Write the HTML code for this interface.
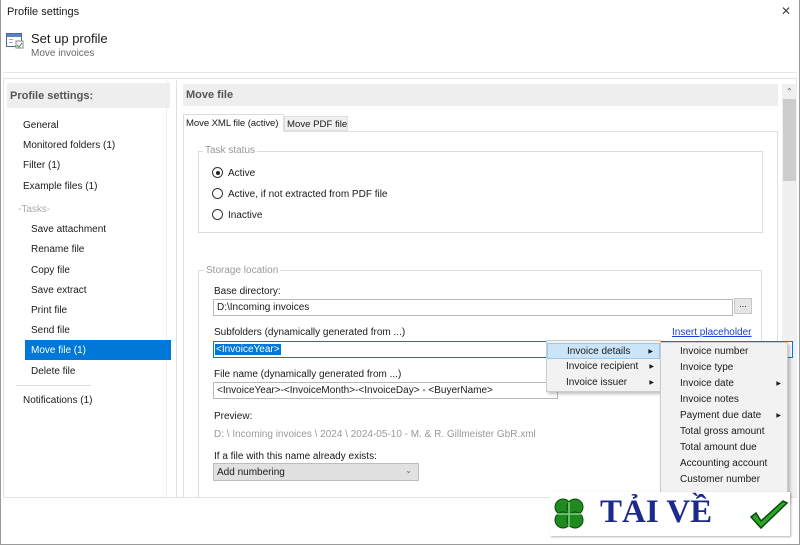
<!DOCTYPE html>
<html><head><meta charset="utf-8"><style>
*{margin:0;padding:0;box-sizing:border-box}
body{width:800px;height:545px;overflow:hidden;background:#fff;font-family:"Liberation Sans",sans-serif;font-size:10px;color:#1a1a1a;position:relative}
.a{position:absolute;white-space:nowrap}
.b{position:absolute;border:1px solid #dcdcdc}
.in{position:absolute;border:1px solid #b8b8b8;background:#fff;height:17px;padding:2px 3px;font-size:10px}
.r{position:absolute;width:11px;height:11px;border:1px solid #333;border-radius:50%;background:#fff}
.mi{position:absolute;left:0;right:0;height:16px;padding-left:19px;line-height:16px;font-size:10px}
.ar{position:absolute;right:6px;font-size:6px}
</style></head><body>
<div class="a" style="left:0;top:0;width:800px;height:545px;border:1px solid #9a9a9a;border-top:none"></div>
<div class="a" style="left:7px;top:6px;font-size:11px">Profile settings</div>
<div class="a" style="left:781px;top:4px;font-size:12px;color:#444">✕</div>
<svg class="a" style="left:6px;top:33px" width="18" height="16"><rect x="0.5" y="0.5" width="15" height="13" fill="#fff" stroke="#4a6b9a"/><rect x="1" y="1" width="14" height="3" fill="#5b83c0"/><rect x="3" y="6" width="4" height="1" fill="#aaa"/><rect x="3" y="9" width="4" height="1" fill="#aaa"/><rect x="10" y="8" width="7" height="7" fill="#fff" stroke="#888"/><path d="M11 12l2 2 3-4" stroke="#2a9a3a" fill="none"/></svg>
<div class="a" style="left:31px;top:31px;font-size:13px">Set up profile</div>
<div class="a" style="left:31px;top:48px;font-size:10px;color:#666">Move invoices</div>
<div class="a" style="left:3px;top:72px;width:794px;height:1px;background:#e6e6e6"></div>
<div class="b" style="left:3px;top:78px;width:794px;height:420px;border-color:#e2e2e2"></div>
<div class="a" style="left:176px;top:80px;width:1px;height:417px;background:#e0e0e0"></div>
<div class="a" style="left:166px;top:80px;width:1px;height:417px;background:#ececec"></div>
<!-- left -->
<div class="a" style="left:7px;top:83px;width:163px;height:25px;background:#eeeeee;font-weight:bold;font-size:11px;color:#555;padding:7px 3px">Profile settings:</div>
<div class="a" style="left:23px;top:120px">General</div>
<div class="a" style="left:23px;top:140px">Monitored folders (1)</div>
<div class="a" style="left:23px;top:160px">Filter (1)</div>
<div class="a" style="left:23px;top:181px">Example files (1)</div>
<div class="a" style="left:18px;top:204px;color:#aaa">-Tasks-</div>
<div class="a" style="left:31px;top:224px">Save attachment</div>
<div class="a" style="left:31px;top:244px">Rename file</div>
<div class="a" style="left:31px;top:265px">Copy file</div>
<div class="a" style="left:31px;top:285px">Save extract</div>
<div class="a" style="left:31px;top:305px">Print file</div>
<div class="a" style="left:31px;top:325px">Send file</div>
<div class="a" style="left:25px;top:340px;width:146px;height:20px;background:#0078d7;color:#fff;padding:5px 6px">Move file (1)</div>
<div class="a" style="left:31px;top:366px">Delete file</div>
<div class="a" style="left:16px;top:385px;width:75px;height:1px;background:#ddd"></div>
<div class="a" style="left:23px;top:395px">Notifications (1)</div>
<!-- right -->
<div class="a" style="left:183px;top:84px;width:595px;height:22px;background:#eeeeee;font-weight:bold;font-size:11px;color:#555;padding:5px 3px">Move file</div>
<div class="a" style="left:782px;top:84px;width:15px;height:413px;background:#f0f0f0"></div>
<div class="a" style="left:786px;top:87px;font-size:8px;color:#555">⌃</div>
<div class="a" style="left:783px;top:99px;width:13px;height:82px;background:#cdcdcd"></div>
<div class="a" style="left:183px;top:131px;width:595px;height:366px;border:1px solid #e0e0e0;border-bottom:none"></div>
<div class="a" style="left:183px;top:114px;width:101px;height:18px;background:#fff;border:1px solid #ddd;border-bottom:1px solid #fff;padding:3px 2px;font-size:9.6px;letter-spacing:-0.1px">Move XML file (active)</div>
<div class="a" style="left:284px;top:116px;width:64px;height:15px;background:#f0f0f0;border:1px solid #ddd;padding:2px 2px;font-size:9.6px">Move PDF file</div>
<div class="b" style="left:198px;top:151px;width:565px;height:82px"></div>
<div class="a" style="left:203px;top:145px;background:#fff;color:#999;padding:0 2px">Task status</div>
<div class="r" style="left:212px;top:167px"><div style="position:absolute;left:2.5px;top:2.5px;width:4px;height:4px;border-radius:50%;background:#222"></div></div>
<div class="a" style="left:228px;top:168px">Active</div>
<div class="r" style="left:212px;top:188px"></div>
<div class="a" style="left:228px;top:189px">Active, if not extracted from PDF file</div>
<div class="r" style="left:212px;top:209px"></div>
<div class="a" style="left:228px;top:210px">Inactive</div>
<div class="b" style="left:198px;top:270px;width:564px;height:228px;border-bottom:none"></div>
<div class="a" style="left:204px;top:265px;background:#fff;color:#999;padding:0 2px">Storage location</div>
<div class="a" style="left:214px;top:286px">Base directory:</div>
<div class="in" style="left:213px;top:299px;width:520px">D:\Incoming invoices</div>
<div class="a" style="left:734px;top:298px;width:18px;height:16px;background:#e6e6e6;border:1px solid #c8c8c8;text-align:center;font-size:9px;line-height:11px">...</div>
<div class="a" style="left:214px;top:327px">Subfolders (dynamically generated from ...)</div>
<div class="a" style="left:672px;top:327px;color:#1a3fd8;text-decoration:underline">Insert placeholder</div>
<div class="in" style="left:213px;top:341px;width:580px;border-color:#0078d7;padding:2px 1px"><span style="background:#0078d7;color:#fff;padding:0 1px">&lt;InvoiceYear&gt;</span></div>
<div class="a" style="left:214px;top:369px">File name (dynamically generated from ...)</div>
<div class="in" style="left:213px;top:382px;width:345px">&lt;InvoiceYear&gt;-&lt;InvoiceMonth&gt;-&lt;InvoiceDay&gt; - &lt;BuyerName&gt;</div>
<div class="a" style="left:214px;top:411px">Preview:</div>
<div class="a" style="left:214px;top:429px;color:#999">D: \ Incoming invoices \ 2024 \ 2024-05-10 - M. &amp; R. Gillmeister GbR.xml</div>
<div class="a" style="left:214px;top:451px">If a file with this name already exists:</div>
<div class="a" style="left:213px;top:463px;width:206px;height:18px;background:#e1e1e1;border:1px solid #bdbdbd;padding:3px 3px">Add numbering<span style="position:absolute;right:6px;top:2px;font-size:8px;color:#666">⌄</span></div>
<!-- menus -->
<div class="a" style="left:546px;top:340px;width:115px;height:52px;background:#f2f2f2;border:1px solid #ccc;box-shadow:2px 2px 3px rgba(0,0,0,.25)">
<div class="mi" style="top:2px;background:#cce4f7;border:1px solid #99c9ef">Invoice details<span class="ar" style="top:0">▶</span></div>
<div class="mi" style="top:18px">Invoice recipient<span class="ar">▶</span></div>
<div class="mi" style="top:34px">Invoice issuer<span class="ar">▶</span></div>
</div>
<div class="a" style="left:660px;top:342px;width:128px;height:160px;background:#f2f2f2;border:1px solid #ccc;box-shadow:2px 2px 3px rgba(0,0,0,.25)">
<div class="mi" style="top:1px">Invoice number</div>
<div class="mi" style="top:17px">Invoice type</div>
<div class="mi" style="top:33px">Invoice date<span class="ar">▶</span></div>
<div class="mi" style="top:49px">Invoice notes</div>
<div class="mi" style="top:65px">Payment due date<span class="ar">▶</span></div>
<div class="mi" style="top:81px">Total gross amount</div>
<div class="mi" style="top:97px">Total amount due</div>
<div class="mi" style="top:113px">Accounting account</div>
<div class="mi" style="top:129px">Customer number</div>
</div>
<!-- watermark -->
<div class="a" style="left:550px;top:492px;width:240px;height:44px;background:#fff;box-shadow:1px 1px 2px rgba(0,0,0,.3)"></div>
<svg class="a" style="left:551px;top:496px" width="36" height="36"><g fill="#1f8a1f" stroke="#0b4a0b"><circle cx="12" cy="11" r="8"/><circle cx="24" cy="11" r="8"/><circle cx="12" cy="24" r="8"/><circle cx="24" cy="24" r="8"/></g><path d="M18 6V30M6 18H30" stroke="#7fd07f" stroke-width="1.5"/></svg>
<div class="a" style="left:600px;top:494px;font-family:'Liberation Serif',serif;font-size:33px;font-weight:bold;color:#1c2a8c;letter-spacing:0px">TẢI VỀ</div>
<svg class="a" style="left:748px;top:500px" width="42" height="32"><path d="M3 17l10 11L39 3l-4-2L13 21 8 13z" fill="#2aa52a" stroke="#0b4a0b" stroke-width="1.5"/></svg>
</body></html>
